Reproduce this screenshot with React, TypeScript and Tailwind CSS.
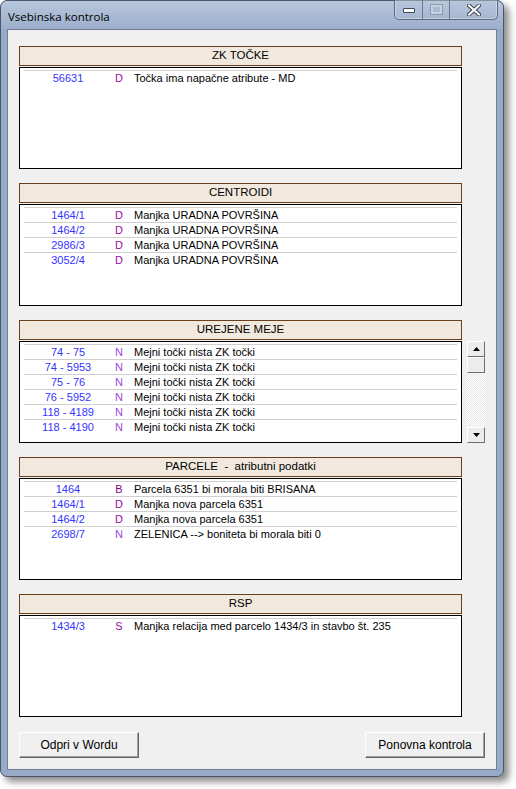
type Row = { id: string; code: string; text: string };

type Section = { title: string; rows: Row[]; scroll?: boolean };

const SECTIONS: Section[] = [
  {
    title: "ZK TOČKE",
    rows: [{ id: "56631", code: "D", text: "Točka ima napačne atribute - MD" }],
  },
  {
    title: "CENTROIDI",
    rows: [
      { id: "1464/1", code: "D", text: "Manjka URADNA POVRŠINA" },
      { id: "1464/2", code: "D", text: "Manjka URADNA POVRŠINA" },
      { id: "2986/3", code: "D", text: "Manjka URADNA POVRŠINA" },
      { id: "3052/4", code: "D", text: "Manjka URADNA POVRŠINA" },
    ],
  },
  {
    title: "UREJENE MEJE",
    scroll: true,
    rows: [
      { id: "74 - 75", code: "N", text: "Mejni točki nista ZK točki" },
      { id: "74 - 5953", code: "N", text: "Mejni točki nista ZK točki" },
      { id: "75 - 76", code: "N", text: "Mejni točki nista ZK točki" },
      { id: "76 - 5952", code: "N", text: "Mejni točki nista ZK točki" },
      { id: "118 - 4189", code: "N", text: "Mejni točki nista ZK točki" },
      { id: "118 - 4190", code: "N", text: "Mejni točki nista ZK točki" },
    ],
  },
  {
    title: "PARCELE  -  atributni podatki",
    rows: [
      { id: "1464", code: "B", text: "Parcela 6351 bi morala biti BRISANA" },
      { id: "1464/1", code: "D", text: "Manjka nova parcela 6351" },
      { id: "1464/2", code: "D", text: "Manjka nova parcela 6351" },
      { id: "2698/7", code: "N", text: "ZELENICA --> boniteta bi morala biti 0" },
    ],
  },
  {
    title: "RSP",
    rows: [{ id: "1434/3", code: "S", text: "Manjka relacija med parcelo 1434/3 in stavbo št. 235" }],
  },
];

const CODE_COLOR: Record<string, string> = {
  D: "text-[#9a0aa6]",
  N: "text-[#9c48dc]",
  B: "text-[#86008a]",
  S: "text-[#9a0aa6]",
};

function ScrollButton({ up }: { up?: boolean }) {
  return (
    <div className="h-[16px] w-full bg-[#ececec] border-t border-l border-t-white border-l-white border-b border-r border-b-[#6e6e6e] border-r-[#6e6e6e] flex items-center justify-center">
      <svg width="7" height="4" viewBox="0 0 7 4">
        {up ? <path d="M3.5 0 L7 4 L0 4 Z" fill="#000" /> : <path d="M0 0 L7 0 L3.5 4 Z" fill="#000" />}
      </svg>
    </div>
  );
}

function ScrollBar() {
  return (
    <div className="w-[18px] h-[102px] flex flex-col">
      <ScrollButton up />
      <div className="h-[16px] w-full bg-[#ececec] border-t border-l border-t-white border-l-white border-b border-r border-b-[#6e6e6e] border-r-[#6e6e6e]" />
      <div className="flex-1 bg-[repeating-conic-gradient(#ffffff_0_25%,#e8e8e8_0_50%)] bg-[length:2px_2px]" />
      <ScrollButton />
    </div>
  );
}

function ListSection({ section }: { section: Section }) {
  return (
    <div className="mb-[14px]">
      <div className="w-[443px] h-[20px] border border-[#6b3f1c] bg-[#f1e9de] flex items-center justify-center text-[11.5px] text-black whitespace-pre">
        {section.title}
      </div>
      <div className="flex gap-[5px] mt-[1px]">
        <div className="w-[443px] h-[102px] border border-black bg-white pt-[2px] px-[4px]">
          {section.rows.map((r, i) => (
            <div key={i} className="h-[15px] border-t border-[#cfcfcf] flex items-center text-[11px] leading-none">
              <span className="w-[88px] text-center text-[#3434ff]">{r.id}</span>
              <span className={`w-[14px] text-center ${CODE_COLOR[r.code]}`}>{r.code}</span>
              <span className="pl-[8px] text-black whitespace-nowrap">{r.text}</span>
            </div>
          ))}
        </div>
        {section.scroll && <ScrollBar />}
      </div>
    </div>
  );
}

function WinButton({ label }: { label: string }) {
  return (
    <button className="w-[120px] h-[26px] bg-[#f0f0f0] border border-t-white border-l-white border-b-[#646464] border-r-[#646464] shadow-[inset_-1px_-1px_0_#a0a0a0] text-[12px] text-black">
      {label}
    </button>
  );
}

export default function App() {
  return (
    <div className="w-[516px] h-[789px] bg-white font-['Liberation_Sans',Arial,sans-serif] overflow-hidden">
      <div className="w-[504px] h-[777px] rounded-[7px] border border-[#4a5668] bg-[#98abc6] shadow-[5px_5px_7px_rgba(0,0,0,0.45)] flex flex-col relative">
        <div className="h-[28px] flex items-start rounded-t-[7px] bg-gradient-to-b from-[#b7c7dc] to-[#9caecb]">
          <span className="pl-[7px] pt-[7px] text-[11.5px] text-black font-['Open_Sans',sans-serif]">Vsebinska kontrola</span>
          <div className="ml-auto mr-[5px] h-[20px] -mt-px flex border border-[#5d6c80] border-t-0 rounded-b-[5px] overflow-hidden shadow-[inset_0_0_0_1px_rgba(255,255,255,0.35)]">
            <div className="w-[28px] flex items-center justify-center border-r border-[#6d7c90]">
              <div className="w-[12px] h-[5px] bg-white border border-[#3b4656] rounded-[1px] mt-[2px]" />
            </div>
            <div className="w-[27px] flex items-center justify-center border-r border-[#6d7c90]">
              <div className="w-[11px] h-[9px] border-2 border-[#c6d2e2] bg-[#a9b9cf] outline outline-1 outline-[#8a9ab0]" />
            </div>
            <div className="w-[47px] flex items-center justify-center">
              <svg width="14" height="12" viewBox="0 0 14 12">
                <path d="M2 1.5 L12 10.5 M12 1.5 L2 10.5" stroke="#3b4656" strokeWidth="4" strokeLinecap="square" />
                <path d="M2 1.5 L12 10.5 M12 1.5 L2 10.5" stroke="#ffffff" strokeWidth="2" strokeLinecap="square" />
              </svg>
            </div>
          </div>
        </div>
        <div className="flex-1 mx-[6px] mb-[6px] border border-[#6f7f96] bg-[#f0f0f0] pt-[16px] pl-[11px] pr-[11px] flex flex-col">
          {SECTIONS.map((s, i) => (
            <ListSection key={i} section={s} />
          ))}
          <div className="flex justify-between mt-[1px]">
            <WinButton label="Odpri v Wordu" />
            <WinButton label="Ponovna kontrola" />
          </div>
        </div>
      </div>
    </div>
  );
}
